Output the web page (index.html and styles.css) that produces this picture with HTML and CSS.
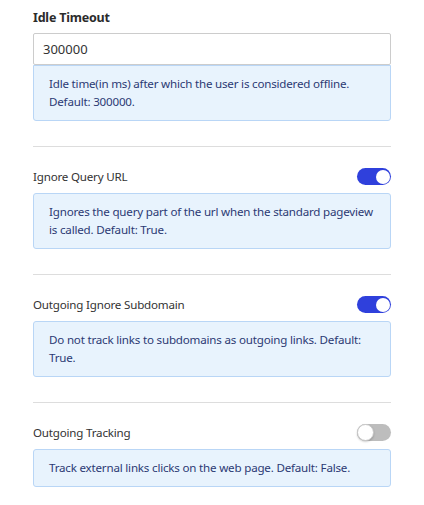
FILE: index.html
```html
<!DOCTYPE html>
<html>
<head>
<meta charset="utf-8">
<link rel="stylesheet" href="styles.css">
</head>
<body>
<div class="settings">
  <div class="field">
    <label class="field-title">Idle Timeout</label>
    <input class="text-input" type="text" value="300000">
    <div class="info">Idle time(in ms) after which the user is considered offline. Default: 300000.</div>
  </div>
  <hr class="divider">
  <div class="field">
    <div class="toggle-row">
      <span class="toggle-label">Ignore Query URL</span>
      <span class="toggle on"><span class="knob"></span></span>
    </div>
    <div class="info">Ignores the query part of the url when the standard pageview is called. Default: True.</div>
  </div>
  <hr class="divider">
  <div class="field">
    <div class="toggle-row">
      <span class="toggle-label">Outgoing Ignore Subdomain</span>
      <span class="toggle on"><span class="knob"></span></span>
    </div>
    <div class="info">Do not track links to subdomains as outgoing links. Default: True.</div>
  </div>
  <hr class="divider">
  <div class="field">
    <div class="toggle-row">
      <span class="toggle-label">Outgoing Tracking</span>
      <span class="toggle off"><span class="knob"></span></span>
    </div>
    <div class="info">Track external links clicks on the web page. Default: False.</div>
  </div>
</div>
</body>
</html>
```
FILE: styles.css
```css
html, body {
  margin: 0;
  padding: 0;
  background: #ffffff;
}
body {
  font-family: "Noto Sans", "Open Sans", sans-serif;
  color: #333333;
}
.settings {
  padding: 9px 33px 0 33px;
}
.field {
  display: flex;
  flex-direction: column;
}
.field-title {
  font-size: 12.5px;
  font-weight: 700;
  letter-spacing: -0.2px;
  line-height: 18px;
  color: #2b2b2b;
  margin-bottom: 6px;
}
.text-input {
  box-sizing: border-box;
  height: 32px;
  width: 100%;
  margin: 0;
  border: 1px solid #cccccc;
  border-radius: 2px;
  padding: 0 9px;
  font-family: inherit;
  font-size: 13px;
  color: #333333;
  background: #ffffff;
  outline: none;
}
.info {
  box-sizing: border-box;
  background: #e8f3fd;
  border: 1px solid #b9d6f6;
  border-radius: 3px;
  padding: 9px 15px 9px 15px;
  font-size: 11.6px;
  letter-spacing: -0.2px;
  line-height: 18px;
  color: #2c3a74;
}
.text-input + .info {
  margin-top: 0;
  border-top-left-radius: 0;
  border-top-right-radius: 0;
}
.divider {
  border: 0;
  border-top: 1px solid #dddddd;
  margin: 25px 0 21px 0;
  height: 0;
}
.toggle-row {
  display: flex;
  align-items: center;
  justify-content: space-between;
  height: 17px;
  margin-bottom: 8px;
}
.toggle-label {
  font-size: 11.6px;
  letter-spacing: -0.2px;
  color: #333333;
}
.toggle {
  position: relative;
  width: 34px;
  height: 17px;
  border-radius: 9px;
  box-sizing: border-box;
}
.toggle.on {
  background: #2f40dc;
}
.toggle.off {
  background: #bdbdbd;
}
.knob {
  position: absolute;
  top: 1.5px;
  width: 14px;
  height: 14px;
  border-radius: 50%;
  background: #ffffff;
}
.toggle.on .knob {
  right: 1.5px;
}
.toggle.off .knob {
  left: 0;
  top: 0;
  width: 17px;
  height: 17px;
  box-sizing: border-box;
  border: 1px solid #c8c8c8;
  box-shadow: 0 1px 2px rgba(0,0,0,0.2);
}
```
